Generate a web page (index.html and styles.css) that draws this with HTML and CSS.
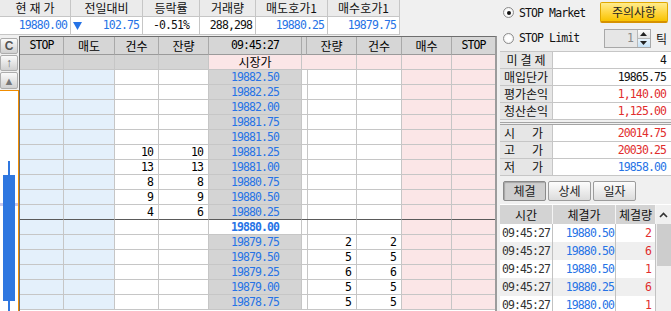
FILE: index.html
```html
<!DOCTYPE html>
<html lang="ko">
<head>
    <meta charset="UTF-8">
    <meta name="viewport" content="width=device-width, initial-scale=1.0">
    <title>STOP 주문</title>
    <link rel="stylesheet" href="styles.css">
</head>
<body>
<div class="screen">
    <div class="main">
        <div class="quote">
            <div class="qh spaced">현재가</div>
            <div class="qh">전일대비</div>
            <div class="qh">등락률</div>
            <div class="qh">거래량</div>
            <div class="qh">매도호가1</div>
            <div class="qh">매수호가1</div>
            <div class="qv num blue">19880.00</div>
            <div class="qv change num blue">
                <svg width="9" height="9" viewBox="0 0 9 9"><polygon points="0,1 9,1 4.5,9" fill="#2673e6"/></svg>
                <span>102.75</span>
            </div>
            <div class="qv center num">-0.51%</div>
            <div class="qv num">288,298</div>
            <div class="qv num blue">19880.25</div>
            <div class="qv num blue">19879.75</div>
        </div>

        <div class="book">
            <div class="tools">
                <button class="tool tool-c">C</button>
                <button class="tool">↑</button>
                <button class="tool tool-up">▲</button>
                <div class="mini-chart">
                    <svg width="18" height="220" viewBox="0 0 18 220">
                        <rect x="0" y="112" width="18" height="3" fill="#cbc8ec"/>
                        <rect x="8" y="70" width="2" height="150" fill="#2f77e0"/>
                        <rect x="3" y="84" width="12" height="126" fill="#2f77e0"/>
                    </svg>
                </div>
            </div>

            <div class="ladder" id="ladder">
                <div class="lrow head">
                    <div class="num">STOP</div>
                    <div>매도</div>
                    <div>건수</div>
                    <div>잔량</div>
                    <div class="num">09:45:27</div>
                    <div></div>
                    <div>잔량</div>
                    <div>건수</div>
                    <div>매수</div>
                    <div class="num">STOP</div>
                </div>
                <div class="lrow market">
                    <div class="mk-ask"></div><div class="mk-ask"></div><div class="mk-ask"></div><div class="mk-ask"></div>
                    <div class="mk-price">시장가</div>
                    <div class="bid"></div><div class="bid"></div><div class="bid"></div><div class="bid"></div><div class="bid"></div>
                </div>
            </div>
        </div>
    </div>

    <aside class="panel">
        <div class="options">
            <div class="opt-row">
                <span class="radio on"></span><span class="num">STOP Market</span>
                <button class="warn">주의사항</button>
            </div>
            <div class="opt-row">
                <span class="radio"></span><span class="num">STOP Limit</span>
                <div class="spin">
                    <div class="spin-val num">1</div>
                    <div class="spin-btns">
                        <span><svg width="7" height="4" viewBox="0 0 7 4"><polygon points="0,4 7,4 3.5,0" fill="#222"/></svg></span>
                        <span><svg width="7" height="4" viewBox="0 0 7 4"><polygon points="0,0 7,0 3.5,4" fill="#222"/></svg></span>
                    </div>
                </div>
                <span class="tick">틱</span>
            </div>
        </div>

        <div class="info">
            <div class="lbl wide">미결제</div><div class="val num">4</div>
            <div class="lbl">매입단가</div><div class="val num">19865.75</div>
            <div class="lbl">평가손익</div><div class="val num red">1,140.00</div>
            <div class="lbl">청산손익</div><div class="val num red">1,125.00</div>
        </div>
        <div class="info prices">
            <div class="lbl split">시 가</div><div class="val num red">20014.75</div>
            <div class="lbl split">고 가</div><div class="val num red">20030.25</div>
            <div class="lbl split">저 가</div><div class="val num blue">19858.00</div>
        </div>

        <div class="tabs">
            <button class="tab on">체결</button>
            <button class="tab">상세</button>
            <button class="tab">일자</button>
        </div>

        <div class="trades">
            <div class="trade-table" id="trade-table">
                <div class="trow head">
                    <div>시간</div>
                    <div>체결가</div>
                    <div>체결량</div>
                </div>
            </div>
            <div class="scroll">
                <div class="scroll-up">
                    <svg width="9" height="6" viewBox="0 0 9 6"><polyline points="1,5 4.5,1.5 8,5" fill="none" stroke="#333" stroke-width="1.6"/></svg>
                </div>
                <div class="scroll-thumb"></div>
            </div>
        </div>
    </aside>
</div>

<script>
const asks = [
    { price: '19882.50' },
    { price: '19882.25' },
    { price: '19882.00' },
    { price: '19881.75' },
    { price: '19881.50' },
    { price: '19881.25', askCount: 10, askQty: 10 },
    { price: '19881.00', askCount: 13, askQty: 13 },
    { price: '19880.75', askCount: 8, askQty: 8 },
    { price: '19880.50', askCount: 9, askQty: 9 },
    { price: '19880.25', askCount: 4, askQty: 6 }
];

const bids = [
    { price: '19879.75', bidQty: 2, bidCount: 2 },
    { price: '19879.50', bidQty: 5, bidCount: 5 },
    { price: '19879.25', bidQty: 6, bidCount: 6 },
    { price: '19879.00', bidQty: 5, bidCount: 5 },
    { price: '19878.75', bidQty: 5, bidCount: 5 }
];

const ticks = [
    { time: '09:45:27', price: '19880.50', vol: 2 },
    { time: '09:45:27', price: '19880.50', vol: 6 },
    { time: '09:45:27', price: '19880.50', vol: 1 },
    { time: '09:45:27', price: '19880.25', vol: 6 },
    { time: '09:45:27', price: '19880.00', vol: 1 }
];

const ladderRow = ({ price, askCount = '', askQty = '', bidQty = '', bidCount = '' }, cls = '') => `
    <div class="lrow ${cls}">
        <div class="ask"></div><div class="ask"></div>
        <div class="num">${askCount}</div><div class="num">${askQty}</div>
        <div class="px num">${price}</div><div></div>
        <div class="num">${bidQty}</div><div class="num">${bidCount}</div>
        <div class="bid"></div><div class="bid"></div>
    </div>`;

const tickRow = ({ time, price, vol }, i) => `
    <div class="trow ${i % 2 ? 'alt' : ''}">
        <div class="t-time num">${time}</div>
        <div class="t-price num blue">${price}</div>
        <div class="t-vol num red">${vol}</div>
    </div>`;

const ladder = document.getElementById('ladder');
ladder.innerHTML += asks.map((row, i) => ladderRow(row, i === asks.length - 1 ? 'edge' : '')).join('')
    + ladderRow({ price: '19880.00' }, 'cur')
    + bids.map(row => ladderRow(row)).join('');

document.getElementById('trade-table').innerHTML += ticks.map(tickRow).join('');
</script>
</body>
</html>
```

FILE: styles.css
```css
:root {
    --blue: #2673e6;
    --red: #e12d2d;
    --line: #c6c6c6;
    --head: #d6d6d6;
    --ask: #e4f0fb;
    --bid: #fbe6e7;
    --price: #d4d4d4;
}

* {
    box-sizing: border-box;
}

body {
    margin: 0;
    width: 671px;
    height: 311px;
    overflow: hidden;
    background: #f0f0f0;
    font-family: "Noto Sans CJK KR", "Liberation Sans", sans-serif;
    font-size: 12px;
    color: #111;
}

.num {
    font-family: "DejaVu Sans Mono", "Liberation Mono", monospace;
    font-size: 11.5px;
    letter-spacing: -0.9px;
}

.blue { color: var(--blue); }
.red { color: var(--red); }

.screen {
    display: flex;
    height: 311px;
}

.main {
    width: 497px;
    display: flex;
    flex-direction: column;
}

/* top quote strip */
.quote {
    display: grid;
    grid-template-columns: 71px 72px 57px 56px 72px 72px;
    grid-template-rows: 17px 18px;
    width: 400px;
}

.quote > div {
    border-right: 1px solid var(--line);
    border-bottom: 1px solid var(--line);
    white-space: nowrap;
}

.qh {
    background: #ebebeb;
    text-align: center;
    line-height: 16px;
}

.qh.spaced {
    letter-spacing: 3px;
    padding-left: 3px;
}

.qv {
    background: #fff;
    text-align: right;
    padding-right: 3px;
    line-height: 17px;
}

.qv.center {
    text-align: center;
    padding-right: 0;
}

.qv.change {
    display: flex;
    justify-content: space-between;
    align-items: center;
    padding-left: 2px;
}

/* order book */
.book {
    display: flex;
    margin-top: 1px;
    flex: 1;
    min-height: 0;
}

.tools {
    width: 19px;
    display: flex;
    flex-direction: column;
    gap: 1px;
    padding-top: 2px;
}

.tool {
    width: 18px;
    height: 16px;
    padding: 0;
    border: 1px solid #adadad;
    border-radius: 2px;
    background: linear-gradient(#fafafa, #d0d0d0);
    color: #666;
    font: 12px/14px "Liberation Sans", sans-serif;
}

.tool-c {
    font-weight: bold;
    color: #555;
}

.tool-up {
    height: 17px;
    font-size: 11px;
    color: #777;
}

.mini-chart {
    flex: 1;
    border-top: 1px solid #f08c00;
    border-right: 1px solid #f08c00;
    background: #fff;
}

.mini-chart svg {
    display: block;
}

.ladder {
    width: 478px;
    border-top: 1px solid #6e6e6e;
    border-left: 1px solid #6e6e6e;
    border-right: 2px solid #9c9c9c;
    background: #fff;
}

.lrow {
    display: grid;
    grid-template-columns: 44px 51px 44px 50px 93px 5px 50px 45px 50px 43px;
    height: 15px;
}

.lrow > div {
    border-right: 1px solid var(--line);
    border-bottom: 1px solid var(--line);
    text-align: right;
    padding-right: 5px;
    line-height: 14px;
    white-space: nowrap;
    color: #000;
}

.lrow > div:last-child {
    border-right: none;
}

.lrow.head {
    height: 18px;
    background: var(--head);
}

.lrow.head > div {
    text-align: center;
    padding: 0;
    line-height: 17px;
    border-right-color: #a9a9a9;
    border-bottom-color: #9a9a9a;
}

.lrow .ask { background: var(--ask); }
.lrow .bid { background: var(--bid); }
.lrow .mk-ask { background: var(--price); }

.lrow .mk-price {
    background: var(--bid);
    text-align: center;
    padding: 0;
}

.lrow .px {
    background: var(--price);
    color: var(--blue);
    text-align: center;
    padding: 0;
}

.lrow.cur .px {
    background: #fff;
    font-weight: bold;
}

.lrow.edge > div {
    border-bottom-color: #5a5a5a;
}

/* right panel */
.panel {
    flex: 1;
    padding-left: 3px;
    display: flex;
    flex-direction: column;
}

.options {
    height: 51px;
    display: grid;
    grid-template-rows: 25px 26px;
}

.opt-row {
    display: flex;
    align-items: center;
}

.radio {
    width: 11px;
    height: 11px;
    margin: 0 5px 0 3px;
    border: 1px solid #8c8c8c;
    border-radius: 50%;
    background: radial-gradient(circle, #fff 40%, #e2e2e2);
    display: inline-flex;
    align-items: center;
    justify-content: center;
}

.radio.on::after {
    content: "";
    width: 4px;
    height: 4px;
    border-radius: 50%;
    background: #111;
}

.warn {
    margin-left: auto;
    margin-right: 3px;
    width: 68px;
    height: 21px;
    padding: 0;
    border: 1px solid #e0a800;
    border-bottom: 2px solid #d69200;
    border-radius: 2px;
    background: linear-gradient(#ffec8e, #ffd53c 55%, #f8c300);
    font: 12px/18px "Noto Sans CJK KR", sans-serif;
    color: #222;
}

.spin {
    margin-left: auto;
    display: flex;
    height: 19px;
    border: 1px solid #a8a8a8;
}

.spin-val {
    width: 32px;
    background: #e6e6e6;
    text-align: right;
    padding-right: 4px;
    color: #888;
    line-height: 17px;
}

.spin-btns {
    width: 13px;
    display: flex;
    flex-direction: column;
    border-left: 1px solid #b8b8b8;
}

.spin-btns span {
    flex: 1;
    display: flex;
    align-items: center;
    justify-content: center;
    background: linear-gradient(#fdfdfd, #e4e4e4);
}

.spin-btns span + span {
    border-top: 1px solid #b8b8b8;
    background: linear-gradient(#e6f3fd, #c6e2f7);
}

.tick {
    margin: 0 4px 0 5px;
}

.info {
    display: grid;
    grid-template-columns: 53px 118px;
    border-top: 1px solid var(--line);
}

.info > div {
    height: 17px;
    border-bottom: 1px solid var(--line);
    line-height: 16px;
    white-space: nowrap;
}

.info .lbl {
    background: #e6e6e6;
    border-right: 1px solid var(--line);
    text-align: center;
}

.info .lbl.wide {
    letter-spacing: 3px;
    padding-left: 3px;
}

.info .lbl.split {
    text-align: justify;
    text-align-last: justify;
    padding: 0 9px 0 4px;
}

.info .val {
    background: #fff;
    text-align: right;
    padding-right: 5px;
    color: #111;
}

.info .val.red { color: var(--red); }
.info .val.blue { color: var(--blue); }

.info.prices {
    margin-top: 2px;
    border-top: 3px double #a4a4a4;
}

.tabs {
    display: flex;
    gap: 2px;
    margin-top: 5px;
    padding-left: 3px;
    height: 20px;
}

.tab {
    width: 43px;
    padding: 0;
    border: 1px solid #9c9c9c;
    border-radius: 2px;
    background: linear-gradient(#fdfdfd, #dcdcdc);
    font: 12px/18px "Noto Sans CJK KR", sans-serif;
    color: #222;
}

.tab.on {
    background: #cfcfcf;
    border-color: #8a8a8a;
    box-shadow: inset 1px 1px 1px rgba(0,0,0,0.2);
}

.trades {
    display: flex;
    margin-top: 3px;
    border-top: 1px solid #fff;
    flex: 1;
    min-height: 0;
    background: #fff;
}

.trade-table {
    width: 156px;
}

.trow {
    display: grid;
    grid-template-columns: 53px 63px 40px;
    height: 18px;
    background: #fff;
}

.trow.alt {
    background: #efefef;
}

.trow > div {
    border-right: 1px solid #c2c2c2;
    line-height: 18px;
    white-space: nowrap;
}

.trow.head {
    height: 19px;
    background: #d3d3d3;
}

.trow.head > div {
    text-align: center;
    line-height: 19px;
    border-right-color: #f4f4f4;
}

.t-time {
    text-align: center;
    color: #333;
}

.t-price {
    text-align: right;
    padding-right: 1px;
}

.t-vol {
    text-align: right;
    padding-right: 4px;
}

.scroll {
    width: 15px;
    display: flex;
    flex-direction: column;
    background: #f0f0f0;
}

.scroll-up {
    height: 19px;
    display: flex;
    align-items: center;
    justify-content: center;
}

.scroll-thumb {
    height: 42px;
    margin-left: 1px;
    background: #cdcdcd;
}
```
